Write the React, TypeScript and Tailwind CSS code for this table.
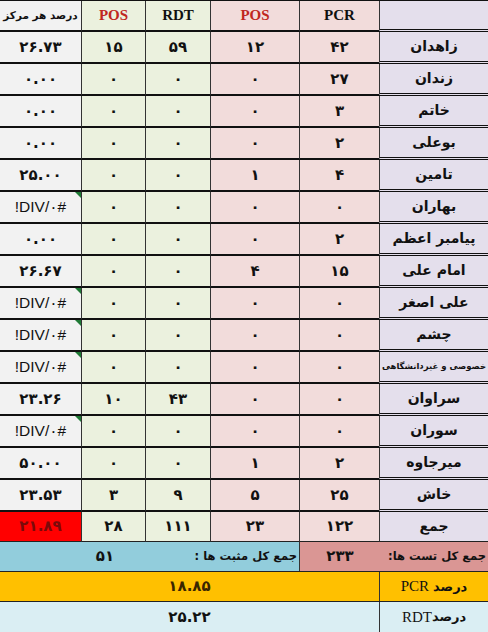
import React from "react";

type Row = { name: string; pcr: string; pos1: string; rdt: string; pos2: string; pct: string; err?: boolean; small?: boolean };

const rows: Row[] = [
  { name: "زاهدان", pcr: "۴۲", pos1: "۱۲", rdt: "۵۹", pos2: "۱۵", pct: "۲۶.۷۳" },
  { name: "زندان", pcr: "۲۷", pos1: "۰", rdt: "۰", pos2: "۰", pct: "۰.۰۰" },
  { name: "خاتم", pcr: "۳", pos1: "۰", rdt: "۰", pos2: "۰", pct: "۰.۰۰" },
  { name: "بوعلی", pcr: "۲", pos1: "۰", rdt: "۰", pos2: "۰", pct: "۰.۰۰" },
  { name: "تامین", pcr: "۴", pos1: "۱", rdt: "۰", pos2: "۰", pct: "۲۵.۰۰" },
  { name: "بهاران", pcr: "۰", pos1: "۰", rdt: "۰", pos2: "۰", pct: "!DIV/۰#", err: true },
  { name: "پیامبر اعظم", pcr: "۲", pos1: "۰", rdt: "۰", pos2: "۰", pct: "۰.۰۰" },
  { name: "امام علی", pcr: "۱۵", pos1: "۴", rdt: "۰", pos2: "۰", pct: "۲۶.۶۷" },
  { name: "علی اصغر", pcr: "۰", pos1: "۰", rdt: "۰", pos2: "۰", pct: "!DIV/۰#", err: true },
  { name: "چشم", pcr: "۰", pos1: "۰", rdt: "۰", pos2: "۰", pct: "!DIV/۰#", err: true },
  { name: "خصوصی و غیردانشگاهی", pcr: "۰", pos1: "۰", rdt: "۰", pos2: "۰", pct: "!DIV/۰#", err: true, small: true },
  { name: "سراوان", pcr: "۰", pos1: "۰", rdt: "۴۳", pos2: "۱۰", pct: "۲۳.۲۶" },
  { name: "سوران", pcr: "۰", pos1: "۰", rdt: "۰", pos2: "۰", pct: "!DIV/۰#", err: true },
  { name: "میرجاوه", pcr: "۲", pos1: "۱", rdt: "۰", pos2: "۰", pct: "۵۰.۰۰" },
  { name: "خاش", pcr: "۲۵", pos1: "۵", rdt: "۹", pos2: "۳", pct: "۲۳.۵۳" },
];

const grid = "grid grid-cols-[81px_64px_65px_89px_80px_109px]";
const cellB = "flex items-center justify-center border-b-2 border-[#111]";
const num = "font-['DejaVu_Sans',sans-serif] font-bold text-[15px] text-[#111]";

function Triangle() {
  return (
    <span className="absolute top-0 right-0 w-0 h-0 border-t-[6px] border-t-[#1f7a35] border-l-[6px] border-l-transparent" />
  );
}

export default function App() {
  return (
    <div className="w-[488px] h-[632px] bg-white overflow-hidden flex flex-col">
      {/* header */}
      <div className={`${grid} h-[32px] border-t border-[#111]`}>
        <div className={`${cellB} bg-[#f2f2f2]`}>
          <span dir="rtl" className="font-['DejaVu_Sans',sans-serif] font-bold text-[10.5px] text-[#111]">درصد هر مرکز</span>
        </div>
        <div className={`${cellB} border-l border-l-[#333] bg-[#ebf1de]`}>
          <span className="font-['Liberation_Serif',serif] font-bold text-[15px] text-[#c0271f]">POS</span>
        </div>
        <div className={`${cellB} border-l border-l-[#333] bg-[#ebf1de]`}>
          <span className="font-['Liberation_Serif',serif] font-bold text-[15px] text-[#111]">RDT</span>
        </div>
        <div className={`${cellB} border-l border-l-[#333] bg-[#f2dcdb]`}>
          <span className="font-['Liberation_Serif',serif] font-bold text-[15px] text-[#c0271f]">POS</span>
        </div>
        <div className={`${cellB} border-l border-l-[#333] bg-[#f2dcdb]`}>
          <span className="font-['Liberation_Serif',serif] font-bold text-[15px] text-[#111]">PCR</span>
        </div>
        <div className="flex items-center justify-center border-l border-l-[#333] border-b-[3px] border-double border-b-[#111] bg-[#e4dfec]" />
      </div>

      {rows.map((r, i) => (
        <div key={i} className={`${grid} h-[32px]`}>
          <div className={`${cellB} relative bg-[#f2f2f2]`}>
            {r.err ? (
              <>
                <span className="font-['Liberation_Sans','DejaVu_Sans',sans-serif] text-[15.5px] text-[#111]">{r.pct}</span>
                <Triangle />
              </>
            ) : (
              <span className={num}>{r.pct}</span>
            )}
          </div>
          <div className={`${cellB} border-l border-l-[#333] bg-[#ebf1de]`}>
            <span className={num}>{r.pos2}</span>
          </div>
          <div className={`${cellB} border-l border-l-[#333] bg-[#ebf1de]`}>
            <span className={num}>{r.rdt}</span>
          </div>
          <div className={`${cellB} border-l border-l-[#333] bg-[#f2dcdb]`}>
            <span className={num}>{r.pos1}</span>
          </div>
          <div className={`${cellB} border-l border-l-[#333] bg-[#f2dcdb]`}>
            <span className={num}>{r.pcr}</span>
          </div>
          <div className="flex items-center justify-center border-l border-l-[#333] border-b-[3px] border-double border-b-[#111] bg-[#e4dfec]">
            <span
              dir="rtl"
              className={`font-['DejaVu_Sans',sans-serif] font-bold text-[#111] whitespace-nowrap ${r.small ? "text-[8.5px] tracking-[-0.3px]" : "text-[14px]"}`}
            >
              {r.name}
            </span>
          </div>
        </div>
      ))}

      {/* total row */}
      <div className={`${grid} h-[30px]`}>
        <div className="flex items-center justify-center bg-[#ff0000] border-b border-[#222]">
          <span className="font-['DejaVu_Sans',sans-serif] font-bold text-[15px] text-[#7a0a0a]">۲۱.۸۹</span>
        </div>
        <div className="flex items-center justify-center border-l border-l-[#333] border-b border-[#222] bg-[#ebf1de]">
          <span className={num}>۲۸</span>
        </div>
        <div className="flex items-center justify-center border-l border-l-[#333] border-b border-[#222] bg-[#ebf1de]">
          <span className={num}>۱۱۱</span>
        </div>
        <div className="flex items-center justify-center border-l border-l-[#333] border-b border-[#222] bg-[#f2dcdb]">
          <span className={num}>۲۳</span>
        </div>
        <div className="flex items-center justify-center border-l border-l-[#333] border-b border-[#222] bg-[#f2dcdb]">
          <span className={num}>۱۲۲</span>
        </div>
        <div className="flex items-center justify-center border-l border-l-[#333] border-b border-[#222] bg-[#e4dfec]">
          <span dir="rtl" className="font-['DejaVu_Sans',sans-serif] font-bold text-[14px] text-[#111]">جمع</span>
        </div>
      </div>

      {/* totals: positives / tests */}
      <div className="flex h-[30px] border-b border-[#222]">
        <div className="w-[299px] flex items-center bg-[#92cddc]">
          <div className="w-[190px] flex items-center justify-center pl-[20px]">
            <span className={num}>۵۱</span>
          </div>
          <div className="flex-1 flex items-center justify-end pr-[2px]">
            <span dir="rtl" className="font-['DejaVu_Sans',sans-serif] font-bold text-[11.5px] text-[#111] whitespace-nowrap">جمع کل مثبت ها :</span>
          </div>
        </div>
        <div className="flex-1 flex items-center border-l border-l-[#333] bg-[#da9694]">
          <div className="w-[80px] flex items-center justify-center">
            <span className={num}>۲۳۳</span>
          </div>
          <div className="flex-1 flex items-center justify-end pr-[2px]">
            <span dir="rtl" className="font-['DejaVu_Sans',sans-serif] font-bold text-[11.5px] text-[#111] whitespace-nowrap">جمع کل تست ها:</span>
          </div>
        </div>
      </div>

      {/* PCR percent */}
      <div className="flex h-[30px] border-b border-[#222] bg-[#ffc000]">
        <div className="w-[379px] flex items-center justify-center">
          <span className="font-['DejaVu_Sans',sans-serif] font-bold text-[15px] text-[#3a2600]">۱۸.۸۵</span>
        </div>
        <div className="flex-1 flex items-center justify-center gap-[4px] border-l border-l-[#333] text-[#111]">
          <span className="font-['Liberation_Serif',serif] text-[15px]">PCR</span>
          <span dir="rtl" className="font-['DejaVu_Sans',sans-serif] font-bold text-[13px]">درصد</span>
        </div>
      </div>

      {/* RDT percent */}
      <div className="flex h-[30px] bg-[#daeef3]">
        <div className="w-[379px] flex items-center justify-center">
          <span className={num}>۲۵.۲۲</span>
        </div>
        <div className="flex-1 flex items-center justify-center border-l border-l-[#333] text-[#111]">
          <span className="font-['Liberation_Serif',serif] text-[15px]">RDT</span>
          <span dir="rtl" className="font-['DejaVu_Sans',sans-serif] font-bold text-[13px]">درصد</span>
        </div>
      </div>
    </div>
  );
}
